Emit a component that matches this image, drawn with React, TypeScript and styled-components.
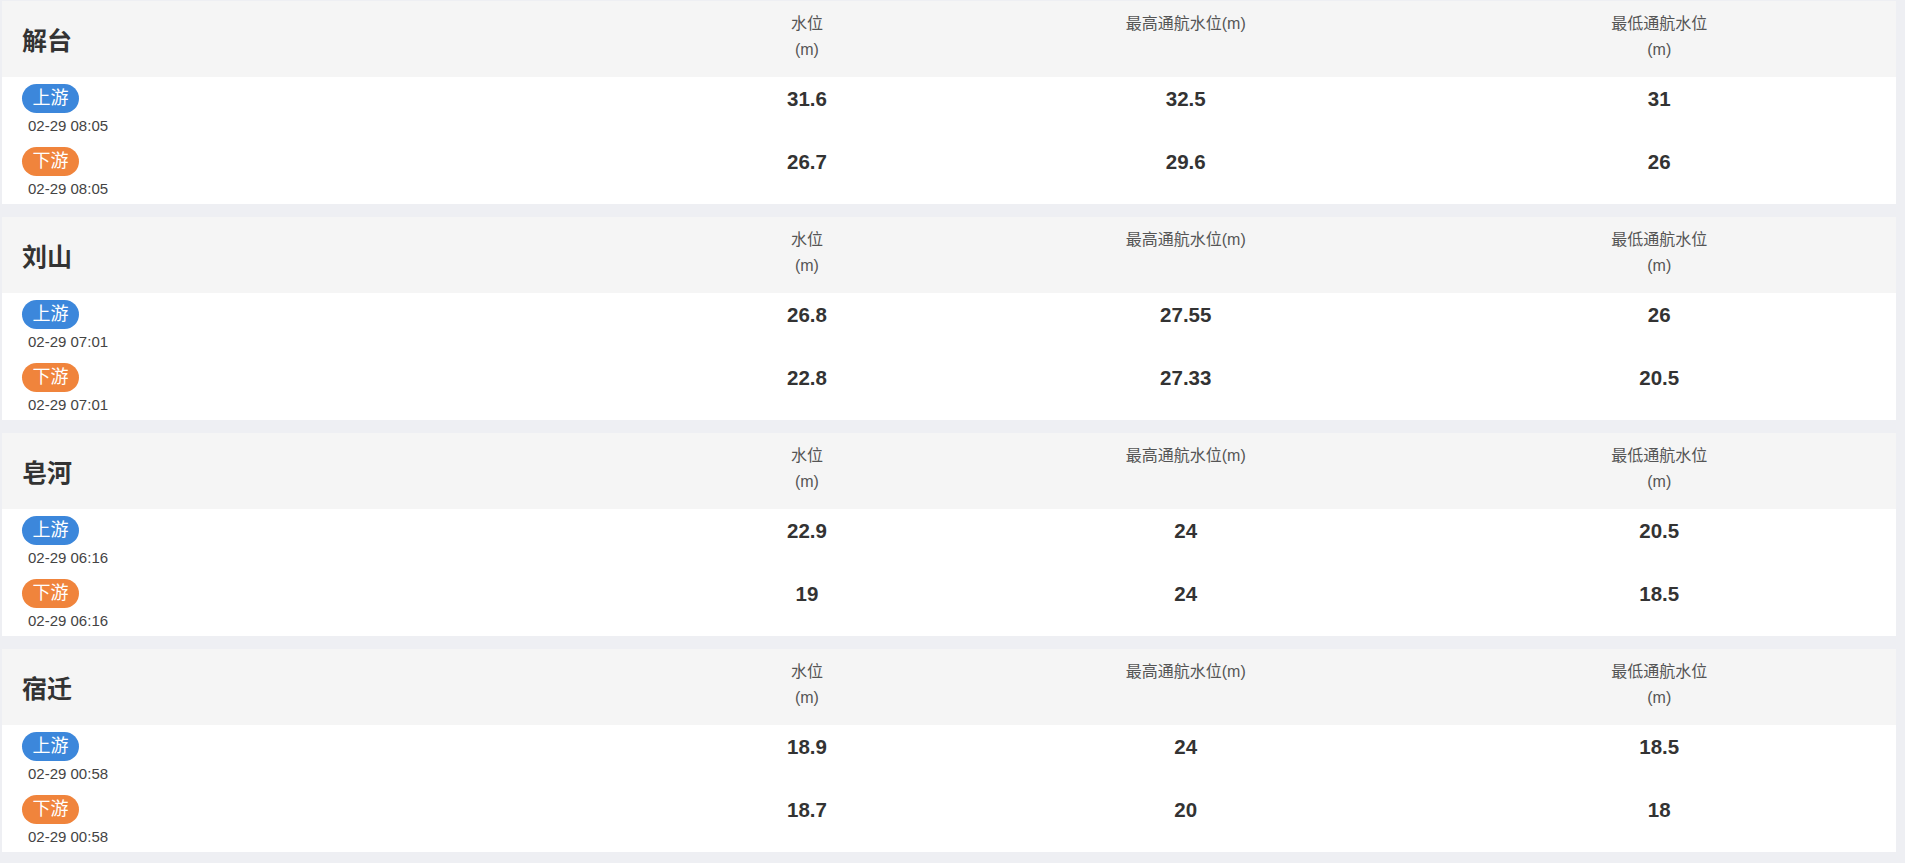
import styled, { createGlobalStyle } from "styled-components";

const GlobalStyle = createGlobalStyle`
  html, body {
    margin: 0;
    padding: 0;
    background: #eeeff3;
  }

  body {
    font-family: "Liberation Sans", "Noto Sans CJK SC", sans-serif;
    color: #333;
  }
`;

const Page = styled.div`
  padding: 1px 9px 0 2px;
`;

const Card = styled.section`
  background: #fff;
  margin-bottom: 13px;

  &:last-child {
    margin-bottom: 0;
  }
`;

const Grid = styled.div`
  display: grid;
  grid-template-columns: 35% 15% 25% 25%;
`;

const Header = styled(Grid)`
  height: 76px;
  background: #f5f5f5;
`;

const Title = styled.h2`
  margin: 0;
  padding-left: 20px;
  align-self: center;
  font-size: 25px;
  font-weight: 700;
  color: #333;
`;

const Label = styled.div`
  padding-top: 10px;
  text-align: center;
  font-size: 16px;
  line-height: 26px;
  color: #555;
`;

const Row = styled(Grid)`
  height: 63px;

  &:last-child {
    height: 64px;
  }
`;

const Gate = styled.div`
  padding: 7px 0 0 20px;
`;

const Badge = styled.span<{ $down?: boolean }>`
  display: inline-block;
  width: 57px;
  height: 29px;
  line-height: 29px;
  border-radius: 15px;
  text-align: center;
  font-size: 18px;
  color: #fff;
  background: ${(p) => (p.$down ? "#f0843c" : "#3c87db")};
`;

const Time = styled.div`
  margin: 3px 0 0 6px;
  font-size: 15px;
  line-height: 20px;
  color: #444;
`;

const Value = styled.div`
  padding-top: 8px;
  text-align: center;
  font-size: 20.5px;
  font-weight: 700;
  line-height: 28px;
  color: #333;
`;

type Level = [string, string, string];

type Station = {
  name: string;
  time: string;
  up: Level;
  down: Level;
};

const stations: Station[] = [
  { name: "解台", time: "02-29 08:05", up: ["31.6", "32.5", "31"], down: ["26.7", "29.6", "26"] },
  { name: "刘山", time: "02-29 07:01", up: ["26.8", "27.55", "26"], down: ["22.8", "27.33", "20.5"] },
  { name: "皂河", time: "02-29 06:16", up: ["22.9", "24", "20.5"], down: ["19", "24", "18.5"] },
  { name: "宿迁", time: "02-29 00:58", up: ["18.9", "24", "18.5"], down: ["18.7", "20", "18"] },
];

function LevelRow({ label, time, values, down }: { label: string; time: string; values: Level; down?: boolean }) {
  return (
    <Row>
      <Gate>
        <Badge $down={down}>{label}</Badge>
        <Time>{time}</Time>
      </Gate>
      {values.map((v, i) => (
        <Value key={i}>{v}</Value>
      ))}
    </Row>
  );
}

export default function App() {
  return (
    <Page>
      <GlobalStyle />
      {stations.map((s) => (
        <Card key={s.name}>
          <Header>
            <Title>{s.name}</Title>
            <Label>
              水位
              <br />
              (m)
            </Label>
            <Label>最高通航水位(m)</Label>
            <Label>
              最低通航水位
              <br />
              (m)
            </Label>
          </Header>
          <LevelRow label="上游" time={s.time} values={s.up} />
          <LevelRow label="下游" time={s.time} values={s.down} down />
        </Card>
      ))}
    </Page>
  );
}
